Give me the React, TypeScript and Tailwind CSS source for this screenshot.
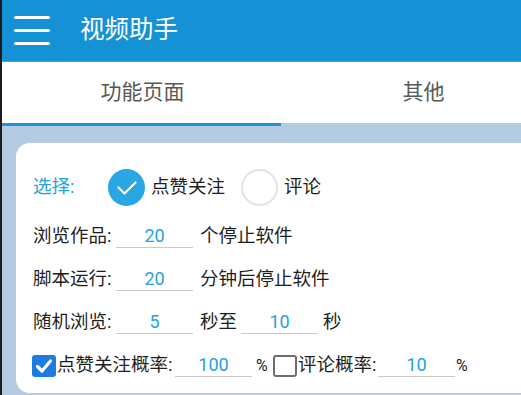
import React from "react";

const font = { fontFamily: "Roboto, 'Noto Sans CJK SC', 'Noto Sans', sans-serif" };

function Field({ value, w = "w-[77px]" }: { value: string; w?: string }) {
  return (
    <div className={`${w} h-[22px] border-b border-[#c9c9c9] flex items-center justify-center text-[18px] leading-none text-[#27a2dc]`}>
      {value}
    </div>
  );
}

function Box({ checked }: { checked: boolean }) {
  if (checked) {
    return (
      <div className="w-[24px] h-[22px] rounded-[3px] bg-[#1e7be0] flex items-center justify-center shrink-0">
        <svg width="18" height="16" viewBox="0 0 18 16">
          <path d="M2.5 8.5 L7 13 L15.5 3" fill="none" stroke="white" strokeWidth="3.2" strokeLinecap="round" strokeLinejoin="round" />
        </svg>
      </div>
    );
  }
  return <div className="w-[24px] h-[22px] rounded-[3px] border-2 border-[#6e6e6e] bg-white shrink-0" />;
}

export default function App() {
  return (
    <div className="w-[521px] h-[395px] overflow-hidden bg-[#b5cbe1] flex flex-col border-l-2 border-[#1c1c1c]" style={font}>
      <div className="h-[62px] bg-[#1592d6] flex items-center shrink-0 border-b border-[#3aa6dd]">
        <div className="pl-[12px] flex flex-col gap-[10px]">
          <div className="w-[36px] h-[3px] bg-white rounded-full" />
          <div className="w-[36px] h-[3px] bg-white rounded-full" />
          <div className="w-[36px] h-[3px] bg-white rounded-full" />
        </div>
        <div className="ml-[30px] text-white text-[24.5px] leading-none">视频助手</div>
      </div>
      <div className="h-[61px] bg-white flex shrink-0">
        <div className="w-[281px] shrink-0 flex items-center justify-center text-[21px] text-[#585858]">功能页面</div>
        <div className="w-[281px] shrink-0 flex items-center justify-center text-[21px] text-[#585858]">其他</div>
      </div>
      <div className="h-[3px] w-[279px] bg-[#1e96d6] shrink-0" />
      <div className="ml-[14px] mt-[17px] bg-white rounded-l-[14px] pt-[17px] pb-[6px] pl-[17px] text-[18.5px] text-[#1e1e1e]">
        <div className="h-[55px] flex items-center">
          <div className="w-[75px] text-[#27a2dc]">选择:</div>
          <div className="w-[37px] h-[37px] rounded-full bg-[#29a6e4] flex items-center justify-center">
            <svg width="22" height="16" viewBox="0 0 22 16">
              <path d="M2.5 7.5 L8.5 13.5 L19.5 2.5" fill="none" stroke="white" strokeWidth="2.2" strokeLinecap="round" strokeLinejoin="round" />
            </svg>
          </div>
          <div className="ml-[6px] w-[90px]">点赞关注</div>
          <div className="w-[37px] h-[37px] rounded-full border-2 border-[#e2e2e2]" />
          <div className="ml-[6px]">评论</div>
        </div>
        <div className="h-[43px] flex items-center">
          <div className="w-[83px]">浏览作品:</div>
          <Field value="20" />
          <div className="ml-[7px]">个停止软件</div>
        </div>
        <div className="h-[43px] flex items-center">
          <div className="w-[83px]">脚本运行:</div>
          <Field value="20" />
          <div className="ml-[7px]">分钟后停止软件</div>
        </div>
        <div className="h-[43px] flex items-center">
          <div className="w-[83px]">随机浏览:</div>
          <Field value="5" />
          <div className="ml-[7px] w-[41px]">秒至</div>
          <Field value="10" />
          <div className="ml-[5px]">秒</div>
        </div>
        <div className="h-[43px] flex items-center">
          <div className="-ml-[1px]"><Box checked /></div>
          <div className="w-[118px] ml-[1px]">点赞关注概率:</div>
          <Field value="100" />
          <div className="ml-[4px] w-[17px] text-[16px]">%</div>
          <Box checked={false} />
          <div className="w-[80px] ml-[1px]">评论概率:</div>
          <Field value="10" />
          <div className="ml-[1px] text-[16px]">%</div>
        </div>
      </div>
    </div>
  );
}
